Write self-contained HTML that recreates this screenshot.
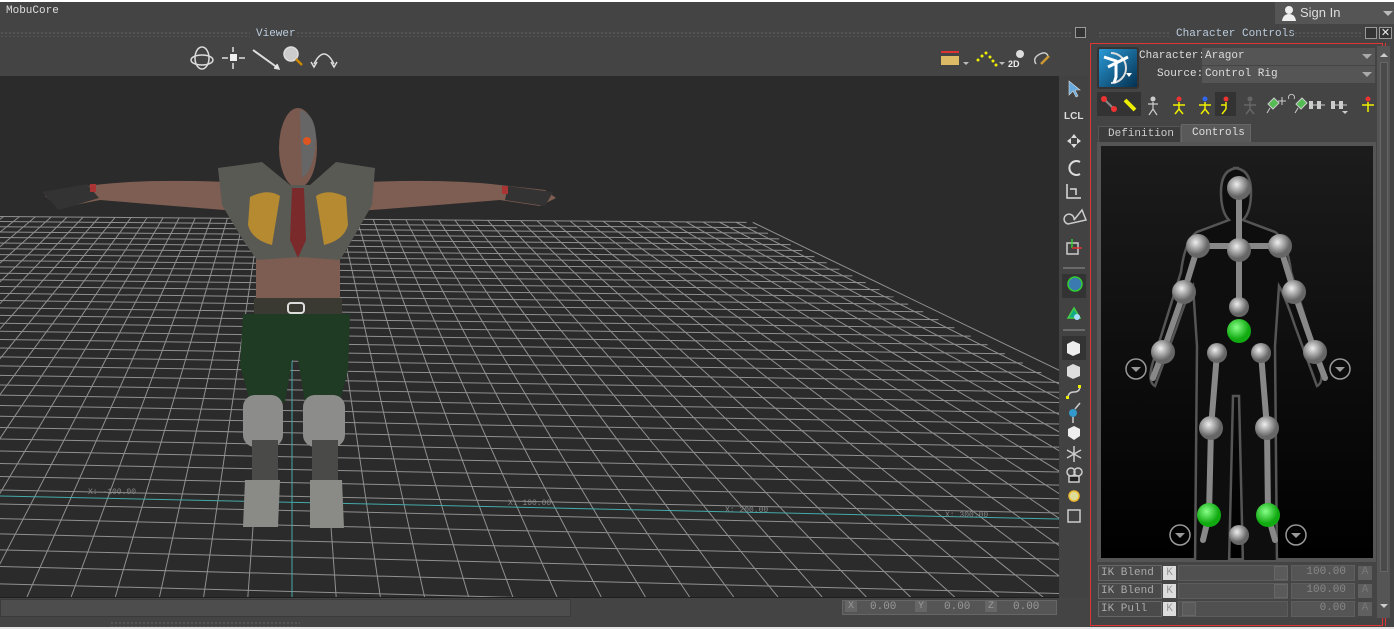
<!DOCTYPE html>
<html><head><meta charset="utf-8">
<style>
*{margin:0;padding:0;box-sizing:border-box}
body{width:1394px;height:629px;overflow:hidden;background:#444;font-family:"Liberation Mono","DejaVu Sans Mono",monospace;font-size:11px;color:#ddd;position:relative}
.a{position:absolute}
.dots{background-image:radial-gradient(#5a5a5a 0.8px,transparent 1px);background-size:4px 4px;height:6px}
.fld{background:#555;border:1px solid #3a3a3a}
.t{font-family:"Liberation Mono",monospace;color:#ccc;font-size:11px;white-space:nowrap}
</style></head><body>
<div class="a" style="left:0;top:0;width:1394px;height:2px;background:#fff"></div>
<div class="a t" style="left:6px;top:5px;color:#ddd">MobuCore</div>
<div class="a" style="left:1275px;top:2px;width:119px;height:22px;background:#555"></div>
<svg class="a" style="left:1281px;top:5px" width="16" height="16"><circle cx="8" cy="5" r="4" fill="#eee"/><path d="M1 16 Q2 9 8 9 Q14 9 15 16Z" fill="#eee"/></svg>
<div class="a" style="left:1300px;top:5px;font-family:'Liberation Sans',sans-serif;font-size:13px;color:#ddd">Sign In</div>
<div class="a" style="left:1383px;top:11px;border:5px solid transparent;border-top-color:#bbb"></div>

<div class="a dots" style="left:0;top:31px;width:250px"></div>
<div class="a t" style="left:256px;top:28px;color:#bcd">Viewer</div>
<div class="a dots" style="left:296px;top:31px;width:776px"></div>
<div class="a" style="left:1075px;top:27px;width:11px;height:11px;border:1px solid #999;background:#333"></div>
<div class="a dots" style="left:1098px;top:31px;width:72px"></div>
<div class="a t" style="left:1176px;top:28px;color:#bcd">Character Controls</div>
<div class="a dots" style="left:1290px;top:31px;width:72px"></div>
<div class="a" style="left:1365px;top:27px;width:12px;height:12px;border:1px solid #999;background:#333"></div>
<div class="a" style="left:1379px;top:27px;width:13px;height:12px;border:1px solid #999;background:#333;color:#eee;font-size:11px;line-height:10px;text-align:center;font-family:'Liberation Sans'">✕</div>

<svg class="a" style="left:186px;top:44px" width="160" height="30" fill="none" stroke="#ddd" stroke-width="1.5">
<ellipse cx="16" cy="14" rx="7" ry="11"/><ellipse cx="16" cy="16" rx="11" ry="5"/>
<rect x="44" y="10" width="7" height="7" fill="#eee" stroke="none"/><path d="M36 14h6M53 14h6M47 3v5M47 19v6"/>
<path d="M67 6L92 24" stroke-width="2"/><path d="M88 24l5 1-2-5" fill="#eee"/>
<circle cx="105" cy="10" r="7" fill="#ccc"/><path d="M110 15l6 6" stroke="#c80" stroke-width="2.5"/>
<path d="M128 20Q138 0 148 20"/><path d="M125 18l3 5 3-5M145 18l3 5 3-5"/>
</svg>
<svg class="a" style="left:938px;top:46px" width="120" height="26">
<rect x="3" y="10" width="18" height="9" fill="#db6"/><path d="M3 6h18" stroke="#d33" stroke-width="2"/>
<path d="M25 16l3 3 3-3" fill="#bbb"/>
<g fill="#ee0"><circle cx="40" cy="14" r="1.5"/><circle cx="44" cy="10" r="1.5"/><circle cx="48" cy="7" r="1.5"/><circle cx="52" cy="11" r="1.5"/><circle cx="55" cy="15" r="1.5"/><circle cx="58" cy="19" r="1.5"/></g>
<path d="M61 16l3 3 3-3" fill="#bbb"/>
<text x="70" y="21" fill="#eee" font-size="9" font-family="Liberation Sans" font-weight="bold">2D</text><circle cx="82" cy="8" r="4" fill="#ddd"/>
<path d="M98 18q-4-6 4-10 6-3 8 2" stroke="#ccc" fill="none" stroke-width="1.5"/><path d="M103 18l8-8" stroke="#c93" stroke-width="2.5"/>
</svg>

<div class="a" style="left:0;top:76px;width:1059px;height:521px;background:#2b2b2b;overflow:hidden">
<svg id="grid" width="1059" height="521" style="position:absolute;left:0;top:0"></svg>
</div>
<svg class="a" style="left:0;top:76px" width="1059" height="521">
<g transform="translate(0,-76)">
<path d="M250 183 Q150 178 95 185 L55 190 L45 196 L60 208 L100 200 Q160 205 250 212Z" fill="#7e5d52"/>
<path d="M345 183 Q440 178 500 185 L545 190 L556 198 L540 206 L500 200 Q440 205 345 212Z" fill="#7e5d52"/>
<path d="M42 192l45-8 12 14-40 12z" fill="#333"/><path d="M508 186l45 6-8 14-40-6z" fill="#333"/>
<rect x="90" y="184" width="6" height="8" fill="#a33"/><rect x="502" y="186" width="6" height="8" fill="#a33"/>
<ellipse cx="298" cy="148" rx="19" ry="40" fill="#7a5a4e"/>
<path d="M300 110 Q316 114 316 140 Q314 170 302 178Z" fill="#666"/>
<circle cx="307" cy="141" r="4" fill="#d52"/>
<rect x="256" y="240" width="84" height="65" fill="#7d5c51"/>
<path d="M218 168 L262 162 L290 185 L310 185 L336 162 L375 168 L372 205 L352 240 L340 260 L300 257 L257 260 L243 240 L222 205Z" fill="#5a5a55"/>
<path d="M250 197 Q268 188 280 196 L272 245 Q252 240 248 225Z" fill="#b58a30"/>
<path d="M346 197 Q328 188 316 196 L324 245 Q344 240 348 225Z" fill="#b58a30"/>
<path d="M292 188 L304 188 L306 240 L298 258 L290 240Z" fill="#7a2a2a"/>
<rect x="254" y="298" width="88" height="16" fill="#3a3a32"/>
<rect x="288" y="303" width="16" height="10" rx="3" fill="none" stroke="#ddd" stroke-width="2"/>
<path d="M243 314 L350 314 L348 370 L340 402 L305 402 L298 360 L292 360 L285 402 L250 402 L240 365Z" fill="#1f3b23"/>
<rect x="243" y="395" width="40" height="52" rx="12" fill="#8c8c8a"/>
<rect x="303" y="395" width="42" height="52" rx="12" fill="#8c8c8a"/>
<rect x="252" y="440" width="26" height="45" fill="#4a4a48"/>
<rect x="312" y="440" width="26" height="45" fill="#4a4a48"/>
<path d="M245 480 L280 480 L278 527 L243 527Z" fill="#8a8a86"/>
<path d="M310 480 L342 480 L344 528 L310 528Z" fill="#8a8a86"/>
</g></svg>

<div class="a" style="left:1059px;top:76px;width:30px;height:521px;background:#424242"></div>
<svg class="a" style="left:1059px;top:76px" width="31" height="460" stroke-width="1.5">
<path d="M10 5l0 14 4-4 3 6 2-1-3-6 5 0z" fill="#6ad" stroke="#ddd" stroke-width="0.6"/>
<text x="5" y="43" fill="#ddd" font-size="10" font-family="Liberation Sans" font-weight="bold">LCL</text>
<path d="M15 58l3 4h-6zM15 72l3-4h-6zM8 65l4-3v6zM22 65l-4-3v6z" fill="#ddd"/>
<path d="M21 86a7 7 0 1 0 0 12" stroke="#ddd" fill="none" stroke-width="2"/>
<path d="M8 108v14h14M11 113h6v6" stroke="#ddd" fill="none"/>
<path d="M9 148a5 5 0 1 1 6-4l8-10 4 10z" stroke="#ccc" fill="none"/>
<rect x="8" y="167" width="11" height="11" stroke="#ccc" fill="none"/><path d="M13 172v-9" stroke="#3c3"/><path d="M13 172h10" stroke="#d33"/>
<path d="M4 192h22" stroke="#777"/>
<rect x="3" y="198" width="24" height="24" fill="#333" stroke="none"/><circle cx="16" cy="208" r="7" fill="#3a7ab0" stroke="#3c3"/>
<path d="M9 242l6-10 6 10z" fill="#1a8" stroke="#4c4"/><circle cx="18" cy="241" r="3" fill="#adf"/>
<path d="M4 254h22" stroke="#777"/>
<rect x="3" y="260" width="24" height="24" fill="#333" stroke="none"/>
<path d="M8 268l6-3 7 3v9l-7 3-6-3z" fill="#eee" stroke="none"/>
<path d="M8 291l6-3 7 3v9l-7 3-6-3z" fill="#ddd" stroke="none"/>
<path d="M9 322q0-6 6-6t6-6" stroke="#ccc" fill="none"/><rect x="7" y="320" width="3" height="3" fill="#ee0" stroke="none"/><rect x="19" y="309" width="3" height="3" fill="#ee0" stroke="none"/>
<circle cx="14" cy="337" r="4" fill="#39c" stroke="none"/><path d="M14 341v6M16 333l5-6" stroke="#ccc"/>
<path d="M9 353l6-3 6 3v7l-6 4-6-4z" fill="#eee" stroke="none"/>
<path d="M15 370v16M8 374l14 8M22 374l-14 8" stroke="#ccc"/>
<circle cx="12" cy="396" r="4" stroke="#ccc" fill="none"/><circle cx="19" cy="396" r="4" stroke="#ccc" fill="none"/><rect x="10" y="400" width="10" height="6" fill="#222" stroke="#ccc"/>
<circle cx="15" cy="420" r="5" fill="#dd9" stroke="#eb3"/>
<rect x="9" y="434" width="12" height="12" stroke="#ccc" fill="none"/>
</svg>

<div class="a" style="left:0;top:597px;width:1059px;height:1px;background:#1e1e1e"></div>
<div class="a fld" style="left:0;top:599px;width:571px;height:18px;background:#4d4d4d"></div>
<div class="a" style="left:842px;top:600px;width:215px;height:15px;background:#555;border:1px solid #666"></div>
<div class="a t" style="left:845px;top:601px;font-size:10px;color:#999;width:12px;background:#666;text-align:center">X</div>
<div class="a t" style="left:870px;top:601px;color:#999">0.00</div>
<div class="a t" style="left:915px;top:601px;font-size:10px;color:#999;width:12px;background:#666;text-align:center">Y</div>
<div class="a t" style="left:944px;top:601px;color:#999">0.00</div>
<div class="a t" style="left:985px;top:601px;font-size:10px;color:#999;width:12px;background:#666;text-align:center">Z</div>
<div class="a t" style="left:1013px;top:601px;color:#999">0.00</div>
<div class="a dots" style="left:110px;top:621px;width:190px"></div>
<div class="a" style="left:0;top:627px;width:1394px;height:2px;background:#e6e6e6"></div>

<div class="a" style="left:1090px;top:43px;width:293px;height:583px;border:1px solid #e03535"></div>
<div class="a" style="left:1385px;top:43px;width:1px;height:583px;background:#e03535"></div>
<div class="a" style="left:1377px;top:46px;width:13px;height:572px;background:#555"></div>
<div class="a" style="left:1380px;top:62px;width:8px;height:510px;background:#4a4a4a;border:1px solid #666"></div>
<div class="a" style="left:1380px;top:49px;border:4px solid transparent;border-bottom-color:#ccc"></div>
<div class="a" style="left:1380px;top:604px;border:4px solid transparent;border-top-color:#ccc"></div>
<div class="a" style="left:1097px;top:47px;width:42px;height:42px;border:2px solid #333;border-radius:3px;background:linear-gradient(135deg,#2a9ad6,#053050)"></div>
<svg class="a" style="left:1099px;top:49px" width="38" height="38"><path d="M12 4a15 15 0 0 1 0 30" stroke="#ddd" stroke-width="2" fill="none"/><path d="M5 8l12 4v16l-2 6M9 18l8-4 12-6" stroke="#fff" stroke-width="3" fill="none"/><path d="M27 24l6 0-3 4z" fill="#fff"/></svg>
<div class="a t" style="left:1139px;top:50px;color:#ddd">Character:</div>
<div class="a t" style="left:1157px;top:68px;color:#ddd">Source:</div>
<div class="a" style="left:1202px;top:48px;width:173px;height:17px;background:#555"></div>
<div class="a" style="left:1202px;top:66px;width:173px;height:17px;background:#555"></div>
<div class="a t" style="left:1205px;top:50px;color:#ddd">Aragor</div>
<div class="a t" style="left:1205px;top:68px;color:#ddd">Control Rig</div>
<div class="a" style="left:1362px;top:54px;border:5px solid transparent;border-top-color:#aaa"></div>
<div class="a" style="left:1362px;top:72px;border:5px solid transparent;border-top-color:#aaa"></div>
<svg class="a" style="left:1096px;top:92px" width="282" height="26">
<rect x="1" y="0" width="44" height="24" fill="#333"/>
<path d="M8 7l10 10" stroke="#888" stroke-width="2"/><circle cx="8" cy="7" r="3" fill="#e33"/><circle cx="18" cy="17" r="3" fill="#e33"/>
<path d="M29 8l10 10" stroke="#ee0" stroke-width="4"/>
<g stroke="#ccc" stroke-width="1.2" fill="none"><path d="M57 10v7M52 12h10M57 17l-4 6M57 17l4 6"/></g><circle cx="57" cy="7" r="2.5" fill="#ccc"/>
<g stroke="#ee0" stroke-width="1.5" fill="none"><path d="M83 10v7M77 13h12M83 17l-4 5M83 17l4 5"/></g><circle cx="83" cy="7" r="2.5" fill="#e33"/>
<g stroke="#ee0" stroke-width="1.5" fill="none"><path d="M109 10v7M103 13h12M109 17l-4 5M109 17l4 5"/></g><circle cx="109" cy="7" r="2.5" fill="#36e"/>
<rect x="119" y="0" width="21" height="24" fill="#333"/>
<g stroke="#ee0" stroke-width="1.5" fill="none"><path d="M130 10v7M125 13h5M130 17l-4 5"/></g><circle cx="130" cy="7" r="2.5" fill="#e33"/>
<g stroke="#666" stroke-width="1.5" fill="none"><path d="M154 10v7M148 13h12M154 17l-4 5M154 17l4 5"/></g><circle cx="154" cy="7" r="2.5" fill="#666"/>
<path d="M172 12l6-6 5 5-6 6zM174 16l-3 5" fill="#5b5" stroke="#ccc"/><path d="M186 5v8M182 9h8" stroke="#ccc"/>
<path d="M200 12l6-6 5 5-6 6zM202 16l-3 5" fill="#5b5" stroke="#ccc"/><path d="M193 7a3 3 0 1 1 5 0" stroke="#ccc" fill="none"/>
<rect x="213" y="9" width="4" height="8" fill="#ccc"/><rect x="221" y="9" width="4" height="8" fill="#ccc"/><path d="M217 13h12" stroke="#ccc"/>
<rect x="235" y="9" width="4" height="8" fill="#ccc"/><rect x="243" y="9" width="4" height="8" fill="#ccc"/><path d="M239 13h12" stroke="#ccc"/><path d="M246 19h6l-3 3z" fill="#ccc"/>
<g stroke="#ee0" stroke-width="1.5" fill="none"><path d="M272 10v10M266 13h12"/></g><circle cx="272" cy="7" r="2.5" fill="#e33"/>
</svg>
<div class="a" style="left:1098px;top:126px;width:83px;height:16px;background:#3c3c3c;border:1px solid #555;border-bottom:none"></div>
<div class="a t" style="left:1108px;top:128px;color:#ccc">Definition</div>
<div class="a" style="left:1181px;top:124px;width:70px;height:19px;background:#595959;border:1px solid #666;border-bottom:none"></div>
<div class="a t" style="left:1192px;top:127px;color:#ddd">Controls</div>
<div class="a" style="left:1097px;top:142px;width:279px;height:420px;background:#555"></div>
<div class="a" style="left:1101px;top:146px;width:272px;height:412px;background:linear-gradient(#1c1c1c,#000)"></div>
<svg class="a" style="left:1095px;top:140px" width="282" height="420">
<defs><radialGradient id="b" cx="40%" cy="35%"><stop offset="0" stop-color="#eee"/><stop offset="1" stop-color="#666"/></radialGradient>
<radialGradient id="g" cx="40%" cy="35%"><stop offset="0" stop-color="#8f8"/><stop offset="1" stop-color="#1a1"/></radialGradient></defs>
<path d="M144 28q-18 0-18 24 0 20 8 28l-32 12q-12 8-16 40l-28 90q-6 20 2 24l22-60q10-30 16-40l4 60-2 220h34l4-170 6 0 4 170h34l-2-220 4-60q6 10 16 40l22 60q8-4 2-24l-28-90q-4-32-16-40l-32-12q8-8 8-28 0-24-18-24z" fill="#0e0e0e" stroke="#555" stroke-width="2.5"/>
<g stroke="#888" stroke-width="6" stroke-linecap="round" fill="none">
<path d="M144 48V168M103 106H185M103 106L89 152L68 212L58 238M185 106L199 152L220 212L230 238M122 213L116 288L114 375L108 400M166 213L172 288L173 375L180 400"/></g>
<g fill="url(#b)"><circle cx="144" cy="48" r="12"/><circle cx="103" cy="106" r="12"/><circle cx="144" cy="110" r="12"/><circle cx="185" cy="106" r="12"/><circle cx="89" cy="152" r="12"/><circle cx="199" cy="152" r="12"/><circle cx="144" cy="167" r="10"/><circle cx="122" cy="213" r="10"/><circle cx="166" cy="213" r="10"/><circle cx="68" cy="212" r="12"/><circle cx="220" cy="212" r="12"/><circle cx="116" cy="288" r="12"/><circle cx="172" cy="288" r="12"/><circle cx="144" cy="395" r="10"/></g>
<g fill="url(#g)"><circle cx="144" cy="191" r="12"/><circle cx="114" cy="375" r="12"/><circle cx="173" cy="375" r="12"/></g>
<g stroke="#999" stroke-width="1.5" fill="none"><circle cx="41" cy="229" r="10"/><circle cx="245" cy="229" r="10"/><circle cx="85" cy="395" r="10"/><circle cx="201" cy="395" r="10"/></g>
<g fill="#999"><path d="M36 227h10l-5 5z"/><path d="M240 227h10l-5 5z"/><path d="M80 393h10l-5 5z"/><path d="M196 393h10l-5 5z"/></g>
</svg>
<div class="a" style="left:1097px;top:564px;width:280px;height:54px;background:#454545"></div>
<div id="rows"></div>
<script>
(function(){
var rows=[["IK Blend T",1274,"100.00"],["IK Blend R",1274,"100.00"],["IK Pull",1182,"0.00"]],h='';
rows.forEach(function(r,i){var y=565+i*18;
h+='<div class="a fld" style="left:1098px;top:'+y+'px;width:64px;height:16px;background:#4a4a4a;border-color:#666"></div>';
h+='<div class="a t" style="left:1101px;top:'+(y+2)+'px;color:#aaa;width:60px;overflow:hidden">'+r[0]+'</div>';
h+='<div class="a" style="left:1163px;top:'+(y+1)+'px;width:13px;height:14px;background:#ddd;color:#999;font-size:11px;text-align:center;line-height:14px">K</div>';
h+='<div class="a" style="left:1178px;top:'+y+'px;width:110px;height:16px;background:#505050;border:1px solid #5c5c5c"></div>';
h+='<div class="a" style="left:'+r[1]+'px;top:'+(y+1)+'px;width:14px;height:14px;background:#5a5a5a;border:1px solid #666"></div>';
h+='<div class="a" style="left:1291px;top:'+y+'px;width:64px;height:16px;background:#555;border:1px solid #5e5e5e;color:#888;text-align:right;padding-right:8px;font-size:11px">'+r[2]+'</div>';
h+='<div class="a" style="left:1358px;top:'+(y+1)+'px;width:14px;height:14px;background:#5f5f5f;color:#777;font-size:11px;text-align:center">A</div>';});
document.getElementById('rows').innerHTML=h;
var s='',H=-198,C=34400;
function rowY(Z){return C/Z+H;}
for(var Z=43;Z<=83;Z++){var y0=rowY(Z);var sl=0.008+(y0-217)/279*0.014;var xe=292+2.1*y0;
 s+='<line x1="0" y1="'+(y0-76)+'" x2="'+xe+'" y2="'+(y0+sl*xe-76)+'" stroke="#909090" stroke-width="1"/>';}
var yf=rowY(83);
for(var k=-30;k<=28;k++){var dx=37*k/500;var y1=yf+0.008*(292+dx*yf);var x1=292+dx*y1;var y2=597,x2=292+dx*y2;
 if(k==0)continue;
 s+='<line x1="'+x1+'" y1="'+(y1-76)+'" x2="'+x2+'" y2="'+(y2-76)+'" stroke="#909090" stroke-width="1"/>';}
s+='<line x1="0" y1="420" x2="1059" y2="443" stroke="#4aa" stroke-width="1"/>';
s+='<line x1="292" y1="'+(yf-76)+'" x2="292" y2="521" stroke="#4aa" stroke-width="1"/>';
s+='<text x="88" y="418" fill="#888" font-size="8" font-family="Liberation Mono">X: -100.00</text><text x="508" y="429" fill="#888" font-size="8" font-family="Liberation Mono">X: 100.00</text><text x="725" y="436" fill="#888" font-size="8" font-family="Liberation Mono">X: 200.00</text><text x="945" y="441" fill="#888" font-size="8" font-family="Liberation Mono">X: 300.00</text>';
document.getElementById('grid').innerHTML=s;
})();
</script>
</body></html>
